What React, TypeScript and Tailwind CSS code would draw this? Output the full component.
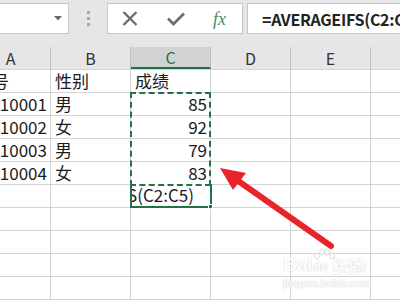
import React from "react";

const F = "font-['Noto_Sans_CJK_SC','Noto_Sans',sans-serif]";

const cols = ["A", "B", "C", "D", "E", "F"];

type Row = [string, string, string];
const rows: Row[] = [
  ["学号", "性别", "成绩"],
  ["10001", "男", "85"],
  ["10002", "女", "92"],
  ["10003", "男", "79"],
  ["10004", "女", "83"],
  ["", "", ""],
  ["", "", ""],
  ["", "", ""],
  ["", "", ""],
  ["", "", ""],
];

function Cell({ children, align = "left" }: { children?: React.ReactNode; align?: "left" | "right" }) {
  return (
    <div
      className={`w-[80px] shrink-0 h-[23px] border-b border-r border-[#d4d4d4] flex items-center overflow-hidden whitespace-nowrap ${
        align === "right" ? "justify-end pr-[3px]" : "justify-start pl-[4px]"
      }`}
    >
      {children}
    </div>
  );
}

export default function App() {
  return (
    <div className={`relative w-[400px] h-[300px] overflow-hidden bg-white ${F} text-[#1a1a1a]`}>
      {/* Top bar */}
      <div className="h-[47px] bg-[#e6e6e6] flex items-start pt-[3px]">
        <div className="w-[69px] h-[31px] bg-white border border-l-0 border-[#c6c6c6] flex items-center justify-end pr-[6px] shrink-0">
          <svg width="8" height="5" viewBox="0 0 8 5">
            <path d="M0 0 L8 0 L4 4.5 Z" fill="#6a6a6a" />
          </svg>
        </div>
        <div className="w-[38px] h-[31px] flex flex-col items-center justify-center gap-[3px] shrink-0">
          <div className="w-[3px] h-[3px] bg-[#a8a8a8]" />
          <div className="w-[3px] h-[3px] bg-[#a8a8a8]" />
          <div className="w-[3px] h-[3px] bg-[#a8a8a8]" />
        </div>
        <div className="w-[136px] h-[31px] bg-white border border-[#c6c6c6] flex items-center shrink-0">
          <svg className="ml-[14px]" width="16" height="15" viewBox="0 0 16 15">
            <path d="M1.5 1 L14.5 14 M14.5 1 L1.5 14" stroke="#6e6e6e" strokeWidth="2.4" />
          </svg>
          <svg className="ml-[29px]" width="18" height="14" viewBox="0 0 18 14">
            <path d="M1 6.5 L6.5 12 L17 1.5" stroke="#6e6e6e" strokeWidth="2.8" fill="none" />
          </svg>
          <span className="ml-[28px] font-['Liberation_Serif',serif] italic text-[18px] text-[#3f8f5f] leading-none">fx</span>
        </div>
        <div className="ml-[4px] flex-1 h-[31px] bg-white border border-r-0 border-[#c6c6c6] flex items-center pl-[14px] overflow-hidden whitespace-nowrap">
          <span className="font-bold text-[16px] tracking-[-0.3px] text-[#222]">=AVERAGEIFS(C2:C5,B2:B5,"男")</span>
        </div>
      </div>

      {/* Sheet */}
      <div className="relative">
        {/* Column headers */}
        <div className="flex h-[23px] bg-[#e6e6e6] border-b border-[#d4d4d4] -ml-[29px]">
          {cols.map((c) => (
            <div
              key={c}
              className={`w-[80px] shrink-0 h-[22px] border-r border-[#bdbdbd] flex items-center justify-center text-[16px] ${
                c === "C" ? "bg-[#d2d2d2] text-[#217346] border-b-2 border-b-[#217346]" : "text-[#333]"
              }`}
            >
              {c}
            </div>
          ))}
        </div>
        {rows.map((r, i) => (
          <div key={i} className="flex -ml-[29px]">
            <Cell align={i === 0 ? "left" : "right"}>
              <span className="text-[17px]">{r[0]}</span>
            </Cell>
            <Cell>
              <span className="text-[17px]">{r[1]}</span>
            </Cell>
            <Cell align={i === 0 ? "left" : "right"}>
              <span className="text-[17px]">{r[2]}</span>
            </Cell>
            <Cell />
            <Cell />
            <Cell />
          </div>
        ))}

        {/* Selected cell C6 (in edit mode, text scrolled to its end) */}
        <div className="absolute left-[130px] top-[137px] w-[82px] h-[24px] border-2 border-t-0 border-[#217346] bg-white">
          <div className="w-full h-full flex items-center justify-end pr-[16px] overflow-hidden whitespace-nowrap">
            <span className="text-[17px] text-[#1a1a2e] shrink-0">=AVERAGEIFS(C2:C5)</span>
          </div>
          <div className="absolute right-[-3px] bottom-[-3px] w-[5px] h-[5px] bg-[#217346] border border-white" />
        </div>
        {/* Dashed range C2:C5 */}
        <div className="absolute left-[130px] top-[45px] w-[81px] h-[94px] border-2 border-dashed border-[#217346]" />
      </div>

      {/* Red arrow */}
      <svg className="absolute left-0 top-0 pointer-events-none" width="400" height="300" viewBox="0 0 400 300">
        <line x1="331" y1="246" x2="234" y2="178" stroke="#e8232a" strokeWidth="6" strokeLinecap="round" />
        <path d="M220 168 L246 173 L233 190 Z" fill="#e8232a" />
      </svg>

      {/* Watermark */}
      <div className="absolute left-[283px] top-[255px] pointer-events-none select-none opacity-80">
        <div className="flex items-end font-['Liberation_Sans',sans-serif] font-bold text-white [text-shadow:0_0_1px_#c8c8c8,0_0_1px_#c8c8c8]">
          <span className="text-[19px] leading-none">Bai</span>
          <span className="relative text-[12px] leading-none ml-[1px] mb-[1px]">
            <svg className="absolute left-[-2px] top-[-13px]" width="24" height="14" viewBox="0 0 24 14">
              <g fill="white" stroke="#cccccc" strokeWidth="0.8">
                <ellipse cx="5" cy="8" rx="2.4" ry="3" />
                <ellipse cx="10" cy="4" rx="2.4" ry="3" />
                <ellipse cx="15" cy="4" rx="2.4" ry="3" />
                <ellipse cx="20" cy="8" rx="2.4" ry="3" />
              </g>
            </svg>
            du
          </span>
          <span className={`${F} text-[17px] leading-none ml-[4px]`}>经验</span>
        </div>
        <div className="font-['Liberation_Sans',sans-serif] font-bold text-[10px] leading-none mt-[5px] text-white [text-shadow:0_0_1px_#c8c8c8,0_0_1px_#c8c8c8]">
          jingyan.baidu.com
        </div>
      </div>
    </div>
  );
}
